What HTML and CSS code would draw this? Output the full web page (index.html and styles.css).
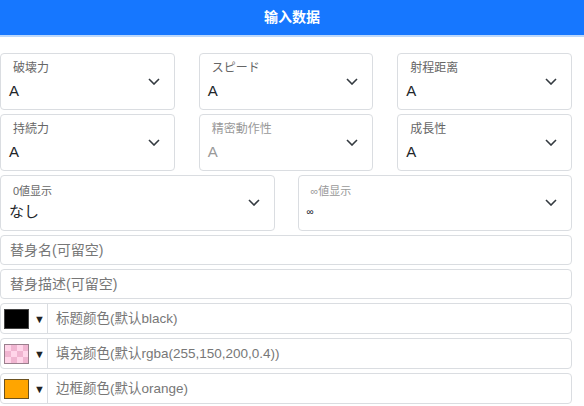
FILE: index.html
```html
<!DOCTYPE html>
<html>
<head>
<meta charset="utf-8">
<link rel="stylesheet" href="styles.css">
</head>
<body>
<div class="header">输入数据</div>
<div class="form">
  <div class="grid3">
    <div class="fsel"><div class="lbl">破壊力</div><div class="val">A</div><svg class="chev" viewBox="0 0 12 7"><path d="M1 1l5 5 5-5"/></svg></div>
    <div class="fsel"><div class="lbl">スピード</div><div class="val">A</div><svg class="chev" viewBox="0 0 12 7"><path d="M1 1l5 5 5-5"/></svg></div>
    <div class="fsel"><div class="lbl">射程距离</div><div class="val">A</div><svg class="chev" viewBox="0 0 12 7"><path d="M1 1l5 5 5-5"/></svg></div>
    <div class="fsel"><div class="lbl">持続力</div><div class="val">A</div><svg class="chev" viewBox="0 0 12 7"><path d="M1 1l5 5 5-5"/></svg></div>
    <div class="fsel dis"><div class="lbl">精密動作性</div><div class="val">A</div><svg class="chev" viewBox="0 0 12 7"><path d="M1 1l5 5 5-5"/></svg></div>
    <div class="fsel"><div class="lbl">成長性</div><div class="val">A</div><svg class="chev" viewBox="0 0 12 7"><path d="M1 1l5 5 5-5"/></svg></div>
  </div>
  <div class="grid2">
    <div class="fsel small"><div class="lbl">0値显示</div><div class="val">なし</div><svg class="chev" viewBox="0 0 12 7"><path d="M1 1l5 5 5-5"/></svg></div>
    <div class="fsel small dis2"><div class="lbl">∞値显示</div><div class="val inf">∞</div><svg class="chev" viewBox="0 0 12 7"><path d="M1 1l5 5 5-5"/></svg></div>
  </div>
  <div class="tinput">替身名(可留空)</div>
  <div class="tinput">替身描述(可留空)</div>
  <div class="crow"><div class="cpick"><span class="sw black"></span><span class="tri">▼</span></div><div class="ctext">标题颜色(默认black)</div></div>
  <div class="crow"><div class="cpick"><span class="sw pink"></span><span class="tri">▼</span></div><div class="ctext">填充颜色(默认rgba(255,150,200,0.4))</div></div>
  <div class="crow"><div class="cpick"><span class="sw orange"></span><span class="tri">▼</span></div><div class="ctext">边框颜色(默认orange)</div></div>
</div>
</body>
</html>
```
FILE: styles.css
```css
* { box-sizing: border-box; }
body {
  margin: 0;
  background: #fff;
  font-family: "Liberation Sans", "Noto Sans CJK SC", sans-serif;
  color: #212529;
}
.header {
  height: 37px;
  background: #1677ff;
  border-bottom: 2px solid #bcd8fb;
  color: #fff;
  font-weight: bold;
  font-size: 14px;
  text-align: center;
  line-height: 35px;
}
.form {
  width: 572px;
  padding-top: 16px;
  display: flex;
  flex-direction: column;
  gap: 4px;
}
.grid3 {
  display: grid;
  grid-template-columns: repeat(3, 1fr);
  column-gap: 24px;
  row-gap: 4px;
}
.grid2 {
  display: grid;
  grid-template-columns: 1fr 1fr;
  column-gap: 23px;
}
.fsel {
  position: relative;
  height: 57px;
  border: 1px solid #dadde1;
  border-radius: 4px;
  padding: 6px 8px 0 8px;
  display: flex;
  flex-direction: column;
}
.lbl {
  font-size: 12px;
  line-height: 16px;
  color: #666;
  padding-left: 4px;
}
.val {
  font-size: 15px;
  line-height: 20px;
  margin-top: 5px;
  color: #212529;
}
.fsel.small { height: 56px; }
.fsel.small .lbl { font-size: 11px; line-height: 16px; padding-left: 4px; margin-top: 1px; }
.fsel.small .val { margin-top: 3px; font-size: 15px; }
.fsel .val.inf { font-size: 10px; margin-top: 3px; }
.dis .lbl, .dis .val { color: #999; }
.dis2 .lbl { color: #999; }
.chev {
  position: absolute;
  right: 14px;
  top: 50%;
  width: 12px;
  height: 7px;
  margin-top: -4px;
  fill: none;
  stroke: #343a40;
  stroke-width: 1.6;
}
.tinput {
  height: 30px;
  border: 1px solid #dadde1;
  border-radius: 4px;
  padding-left: 9px;
  font-size: 14px;
  line-height: 28px;
  color: #777;
}
.crow {
  height: 31px;
  border: 1px solid #dadde1;
  border-radius: 4px;
  display: flex;
  align-items: stretch;
}
.cpick {
  width: 47px;
  border-right: 1px solid #dadde1;
  display: flex;
  align-items: center;
  padding-left: 3px;
  gap: 5px;
}
.sw {
  width: 25px;
  height: 20px;
  border: 1px solid #444;
  display: block;
}
.sw.black { background: #000; }
.sw.pink {
  border-color: #9a7f8d;
  background-color: #fff;
  background-image:
    linear-gradient(rgba(255,150,200,0.4), rgba(255,150,200,0.4)),
    conic-gradient(#e6c9d6 25%, transparent 0 50%, #e6c9d6 0 75%, transparent 0);
  background-size: 100% 100%, 12px 12px;
}
.sw.orange { background: #ffa500; border-color: #6b5220; }
.tri {
  font-size: 11px;
  color: #222;
}
.ctext {
  padding-left: 8px;
  font-size: 13.5px;
  line-height: 29px;
  color: #777;
}
```
